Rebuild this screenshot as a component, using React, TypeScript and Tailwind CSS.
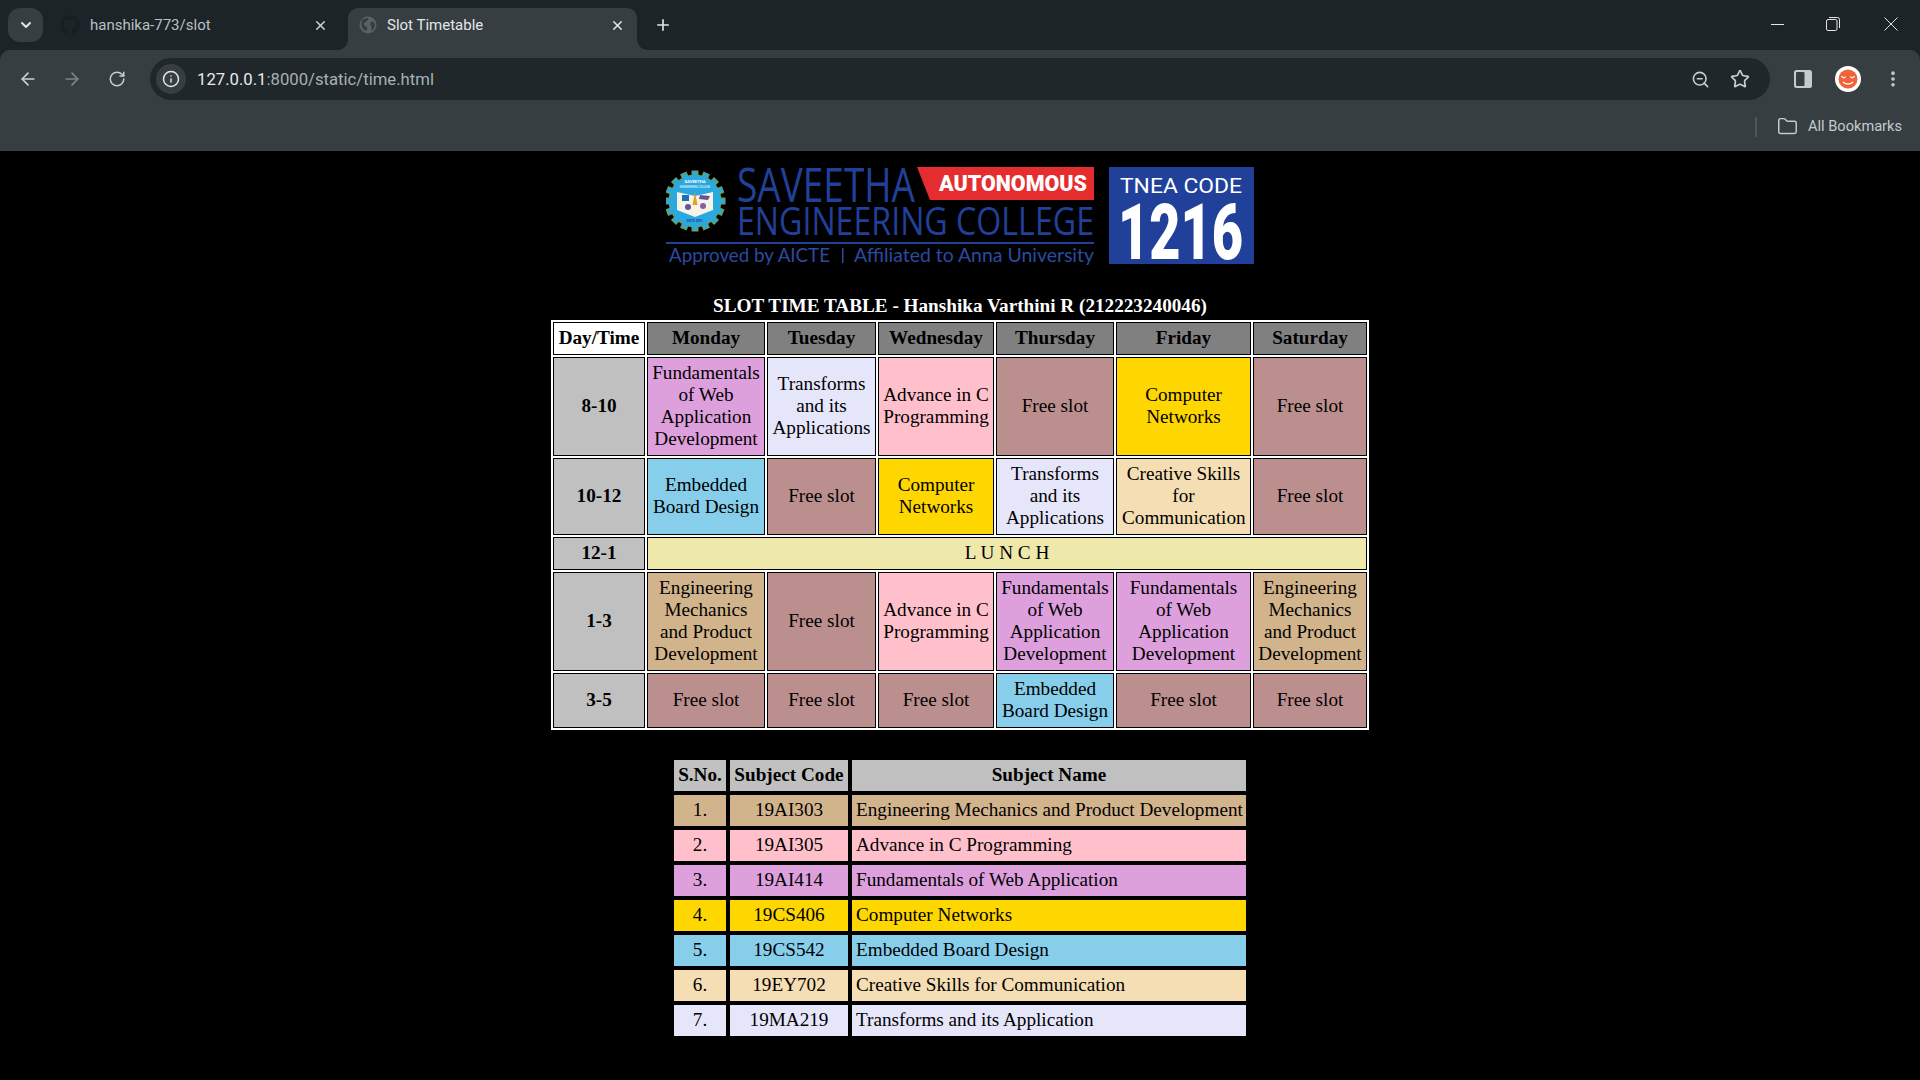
import { ArrowLeft, ArrowRight, ChevronDown, EllipsisVertical, Folder, Info, Plus, RotateCw, Star, X, ZoomOut } from "lucide-react";
import { FaGithub } from "react-icons/fa";

const WEB = "bg-[#dda0dd]";
const MATHS = "bg-[#e6e6fa]";
const C_PROG = "bg-[#ffc0cb]";
const FREE = "bg-[#bc8f8f]";
const NETWORKS = "bg-[#ffd700]";
const BOARD = "bg-[#87ceeb]";
const CREATIVE = "bg-[#f5deb3]";
const MECH = "bg-[#d2b48c]";

const WEB_NAME = "Fundamentals of Web Application Development";
const MATHS_NAME = "Transforms and its Applications";
const C_NAME = "Advance in C Programming";
const NET_NAME = "Computer Networks";
const BOARD_NAME = "Embedded Board Design";
const MECH_NAME = "Engineering Mechanics and Product Development";
const CREATIVE_NAME = "Creative Skills for Communication";
const FREE_NAME = "Free slot";

const days = ["Monday", "Tuesday", "Wednesday", "Thursday", "Friday", "Saturday"];

const slots = [
  {
    time: "8-10",
    height: "h-[99px]",
    cells: [
      [WEB_NAME, WEB],
      [MATHS_NAME, MATHS],
      [C_NAME, C_PROG],
      [FREE_NAME, FREE],
      [NET_NAME, NETWORKS],
      [FREE_NAME, FREE],
    ],
  },
  {
    time: "10-12",
    height: "h-[77px]",
    cells: [
      [BOARD_NAME, BOARD],
      [FREE_NAME, FREE],
      [NET_NAME, NETWORKS],
      [MATHS_NAME, MATHS],
      [CREATIVE_NAME, CREATIVE],
      [FREE_NAME, FREE],
    ],
  },
  { time: "12-1", height: "h-[33px]", cells: [] },
  {
    time: "1-3",
    height: "h-[99px]",
    cells: [
      [MECH_NAME, MECH],
      [FREE_NAME, FREE],
      [C_NAME, C_PROG],
      [WEB_NAME, WEB],
      [WEB_NAME, WEB],
      [MECH_NAME, MECH],
    ],
  },
  {
    time: "3-5",
    height: "h-[55px]",
    cells: [
      [FREE_NAME, FREE],
      [FREE_NAME, FREE],
      [FREE_NAME, FREE],
      [BOARD_NAME, BOARD],
      [FREE_NAME, FREE],
      [FREE_NAME, FREE],
    ],
  },
];

const subjects = [
  ["1.", "19AI303", "Engineering Mechanics and Product Development", MECH],
  ["2.", "19AI305", "Advance in C Programming", C_PROG],
  ["3.", "19AI414", "Fundamentals of Web Application", WEB],
  ["4.", "19CS406", "Computer Networks", NETWORKS],
  ["5.", "19CS542", "Embedded Board Design", BOARD],
  ["6.", "19EY702", "Creative Skills for Communication", CREATIVE],
  ["7.", "19MA219", "Transforms and its Application", MATHS],
];

function GlobeFavicon() {
  return (
    <svg width="18" height="18" viewBox="0 0 18 18" className="shrink-0">
      <circle cx="9" cy="9" r="8.5" fill="#5a6266" />
      <path d="M3 4c2-1 4-2 6-2 1 1 0 2-1 3s-3 1-3 3 2 2 3 3 0 3-1 4C4 14 1 9 3 4z" fill="#363e42" />
      <path d="M12 6c2-1 3 0 4 2 0 3-1 5-3 7-1-2 0-3-1-5s-1-3 0-4z" fill="#363e42" />
    </svg>
  );
}

function BrowserChrome() {
  return (
    <header className="shrink-0 bg-[#1c2428] [font-family:Roboto,sans-serif]">
      <div className="flex h-[50px] items-start pl-2">
        <div className="mt-2 flex h-[34px] w-[35px] items-center justify-center rounded-[12px] bg-[#363e42]">
          <ChevronDown size={16} strokeWidth={3} className="text-[#dfe3e5]" />
        </div>
        <div className="ml-[17px] mt-2 flex h-[34px] w-[288px] items-center pr-5">
          <FaGithub size={20} className="shrink-0 text-[#181f22]" />
          <span className="ml-[10px] text-[15px] text-[#b9c0c4]">hanshika-773/slot</span>
          <X size={15} strokeWidth={2.5} className="ml-auto text-[#c9ced1]" />
        </div>
        <div className="relative mt-2 flex h-[42px] w-[289px] items-center self-start rounded-t-[10px] bg-[#363e42] pb-2 pl-[11px] pr-3">
          <span className="absolute bottom-0 left-[-10px] h-[10px] w-[10px] bg-[radial-gradient(circle_at_0_0,transparent_9.5px,#363e42_10px)]" />
          <span className="absolute bottom-0 right-[-10px] h-[10px] w-[10px] bg-[radial-gradient(circle_at_100%_0,transparent_9.5px,#363e42_10px)]" />
          <GlobeFavicon />
          <span className="ml-[10px] text-[15px] text-[#e3e6e8]">Slot Timetable</span>
          <X size={15} strokeWidth={2.5} className="ml-auto text-[#dfe3e5]" />
        </div>
        <Plus size={18} strokeWidth={2.2} className="ml-[17px] mt-4 text-[#dfe3e5]" />
        <div className="ml-auto flex h-[48px] items-center text-[#dfe3e5]">
          <div className="flex w-[56px] justify-center">
            <span className="h-[1px] w-[13px] bg-[#e3e6e8]" />
          </div>
          <div className="flex w-[56px] justify-center">
            <svg width="14" height="14" viewBox="0 0 14 14" fill="none" stroke="#e3e6e8" strokeWidth="1">
              <rect x="0.5" y="2.5" width="10.5" height="11" rx="1.5" />
              <path d="M3 0.5h8.5a2 2 0 0 1 2 2V11" />
            </svg>
          </div>
          <div className="flex w-[59px] justify-center">
            <svg width="14" height="14" viewBox="0 0 14 14" fill="none" stroke="#e3e6e8" strokeWidth="1">
              <path d="M0.5 0.5l13 13M13.5 0.5l-13 13" />
            </svg>
          </div>
        </div>
      </div>
      <div className="rounded-t-[10px] bg-[#363e42]">
        <div className="flex h-[58px] items-center pl-[6px] pr-[5px]">
          <div className="flex w-[44px] justify-center">
            <ArrowLeft size={20} strokeWidth={2} className="text-[#c9ced1]" />
          </div>
          <div className="flex w-[44px] justify-center">
            <ArrowRight size={20} strokeWidth={2} className="text-[#7d8589]" />
          </div>
          <div className="flex w-[45px] justify-center">
            <RotateCw size={18} strokeWidth={2} className="text-[#c9ced1]" />
          </div>
          <div className="ml-[11px] flex h-[42px] flex-1 items-center rounded-full bg-[#1f272b] pl-[6px]">
            <div className="flex h-[30px] w-[30px] items-center justify-center rounded-full bg-[#363e42]">
              <Info size={18} strokeWidth={2} className="text-[#e3e6e8]" />
            </div>
            <span className="ml-[11px] pt-[2px] text-[16.7px] text-[#a9b0b4]">
              <span className="text-[#e8eaec]">127.0.0.1</span>:8000/static/time.html
            </span>
            <div className="ml-auto flex w-[40px] justify-center">
              <ZoomOut size={19} strokeWidth={2} className="text-[#c9ced1]" />
            </div>
            <div className="mr-[10px] flex w-[40px] justify-center">
              <Star size={20} strokeWidth={2} className="text-[#c9ced1]" />
            </div>
          </div>
          <div className="ml-[10px] flex w-[45px] justify-center">
            <svg width="18" height="18" viewBox="0 0 18 18">
              <rect x="0" y="0" width="18" height="18" rx="2.5" fill="#c4cacd" />
              <rect x="2" y="2" width="8.5" height="14" rx="1" fill="#363e42" />
            </svg>
          </div>
          <div className="flex w-[45px] justify-center">
            <svg width="26" height="26" viewBox="0 0 26 26">
              <circle cx="13" cy="13" r="13" fill="#ffffff" />
              <circle cx="13" cy="13" r="9.5" fill="#f0623a" />
              <path d="M6.5 10c1 2 3 2.5 4 .5M15.500 10.500c1 2 3 1.500 4-.5M8 16c3 2.500 7 2.500 10 0" stroke="#ffffff" strokeWidth="1.2" fill="none" />
            </svg>
          </div>
          <div className="flex w-[45px] justify-center">
            <EllipsisVertical size={20} strokeWidth={2.4} className="text-[#c4cacd]" />
          </div>
        </div>
        <div className="flex h-[43px] items-center justify-end pb-[6px] pr-[18px]">
          <span className="h-[20px] w-[2px] bg-[#4e565a]" />
          <Folder size={21} strokeWidth={1.7} className="ml-[20px] text-[#c4cacd]" />
          <span className="ml-[10px] text-[14.6px] text-[#c4cacd]">All Bookmarks</span>
        </div>
      </div>
    </header>
  );
}

function Logo() {
  const teeth = Array.from({ length: 16 }, (_, i) => (i * 360) / 16);
  return (
    <svg width="588" height="98" viewBox="0 0 588 98" className="mx-auto mt-4 block shrink-0">
      <g transform="translate(29 34)">
        {teeth.map((angle) => (
          <rect key={angle} x="-3.500" y="-30.500" width="7" height="10" fill="#7d9a3c" transform={`rotate(${angle})`} />
        ))}
        <circle r="26.500" fill="#7d9a3c" />
        {teeth.map((angle) => (
          <rect key={angle} x="-2.500" y="-29.500" width="5" height="9" fill="#29a9e0" transform={`rotate(${angle})`} />
        ))}
        <circle r="25.500" fill="#29a9e0" />
        <path d="M-18 -9 L0 -5 L18 -9 L18 9 L0 16 L-18 9 Z" fill="#f7f4e6" />
        <rect x="-13" y="-6" width="7" height="6" fill="#1f6fb5" />
        <path d="M0 -9 L-2.500 4 L2.500 4 Z" fill="#e8a020" />
        <circle cx="-7" cy="6" r="3" fill="#6a4fa0" />
        <circle cx="8" cy="5" r="3" fill="#8a5aa8" />
        <path d="M5 -6 L15 -5 L13 -1 L4 -2 Z" fill="#6a4fa0" />
        <text y="-18" textAnchor="middle" fontSize="4.200" fontWeight="700" fill="#ffffff" fontFamily="Roboto, sans-serif">SAVEETHA</text>
        <text y="-13" textAnchor="middle" fontSize="2.800" fill="#ffffff" fontFamily="Roboto, sans-serif">ENGINEERING COLLEGE</text>
        <text y="21" textAnchor="middle" fontSize="3.200" fontWeight="700" fill="#1f3f9a" fontFamily="Roboto, sans-serif">ESTD 2001</text>
      </g>
      <text x="71" y="35" fontSize="47" fontWeight="500" fill="#21409a" fontFamily="'Open Sans', sans-serif" textLength="178" lengthAdjust="spacingAndGlyphs">SAVEETHA</text>
      <text x="71" y="68" fontSize="38" fontWeight="500" fill="#21409a" fontFamily="'Open Sans', sans-serif" textLength="357" lengthAdjust="spacingAndGlyphs">ENGINEERING COLLEGE</text>
      <polygon points="251,0 428,0 428,33 264,33" fill="#e52d2f" />
      <text x="273" y="24" fontSize="22" fontWeight="900" fill="#ffffff" fontFamily="Roboto, sans-serif" textLength="148" lengthAdjust="spacingAndGlyphs">AUTONOMOUS</text>
      <rect x="0" y="75" width="428" height="2" fill="#21409a" />
      <text x="3" y="95" fontSize="19" fill="#2c4aa0" fontFamily="Lato, sans-serif" textLength="161" lengthAdjust="spacingAndGlyphs">Approved by AICTE</text>
      <rect x="176" y="81" width="1.500" height="15" fill="#2c4aa0" />
      <text x="188" y="95" fontSize="19" fill="#2c4aa0" fontFamily="Lato, sans-serif" textLength="240" lengthAdjust="spacingAndGlyphs">Affiliated to Anna University</text>
      <rect x="443" y="0" width="145" height="97" fill="#21409a" />
      <text x="454" y="26" fontSize="21" fill="#ffffff" fontFamily="Roboto, sans-serif" textLength="122" lengthAdjust="spacingAndGlyphs">TNEA CODE</text>
      <text x="452" y="92" fontSize="78" fontWeight="900" fill="#ffffff" fontFamily="Roboto, sans-serif" textLength="125" lengthAdjust="spacingAndGlyphs">1216</text>
    </svg>
  );
}

function Timetable() {
  return (
    <table className="mx-auto mt-[29px] w-[818px] table-fixed border-separate border-spacing-[2px] bg-white text-center text-[19.2px] leading-[22px] text-black">
      <caption className="bg-black pb-[3px] font-bold leading-[23px] text-white">
        SLOT TIME TABLE - Hanshika Varthini R (212223240046)
      </caption>
      <colgroup>
        <col className="w-[92px]" />
        <col className="w-[118px]" />
        <col className="w-[109px]" />
        <col className="w-[116px]" />
        <col className="w-[118px]" />
        <col className="w-[135px]" />
        <col className="w-[114px]" />
      </colgroup>
      <thead>
        <tr className="h-[33px]">
          <th className="border border-black bg-white p-0 pb-[1px]">Day/Time</th>
          {days.map((day) => (
            <th key={day} className="border border-black bg-[#808080] p-0 pb-[1px]">
              {day}
            </th>
          ))}
        </tr>
      </thead>
      <tbody>
        {slots.map((slot) => (
          <tr key={slot.time} className={slot.height}>
            <th className="border border-black bg-[#c0c0c0] p-0 pb-[1px]">{slot.time}</th>
            {slot.cells.length === 0 && (
              <td colSpan={6} className="border border-black bg-[#eee8aa] p-0 pb-[1px]">
                L U N C H
              </td>
            )}
            {slot.cells.map(([name, colour], i) => (
              <td key={i} className={`border border-black pb-[1px] pt-0 ${i === 4 ? "px-[5px]" : "px-[1px]"} ${colour}`}>
                {name}
              </td>
            ))}
          </tr>
        ))}
      </tbody>
    </table>
  );
}

function SubjectTable() {
  return (
    <table className="mx-auto mt-[26px] w-[580px] table-fixed border-separate border-spacing-[4px] text-center text-[19.2px] leading-[22px] text-black">
      <colgroup>
        <col className="w-[52px]" />
        <col className="w-[118px]" />
        <col className="w-[394px]" />
      </colgroup>
      <thead>
        <tr className="h-[31px]">
          <th className="bg-[#c0c0c0] p-0 pb-[1px]">S.No.</th>
          <th className="bg-[#c0c0c0] p-0 pb-[1px]">Subject Code</th>
          <th className="bg-[#c0c0c0] p-0 pb-[1px]">Subject Name</th>
        </tr>
      </thead>
      <tbody>
        {subjects.map(([no, code, name, colour]) => (
          <tr key={code} className="h-[31px]">
            <td className={`p-0 pb-[1px] ${colour}`}>{no}</td>
            <td className={`p-0 pb-[1px] ${colour}`}>{code}</td>
            <td className={`pb-[1px] pl-[4px] pr-0 pt-0 text-left ${colour}`}>{name}</td>
          </tr>
        ))}
      </tbody>
    </table>
  );
}

export default function App() {
  return (
    <div className="flex h-screen w-screen flex-col overflow-hidden bg-black">
      <BrowserChrome />
      <main className="[font-family:'Liberation_Serif',serif]">
        <Logo />
        <Timetable />
        <SubjectTable />
      </main>
    </div>
  );
}
